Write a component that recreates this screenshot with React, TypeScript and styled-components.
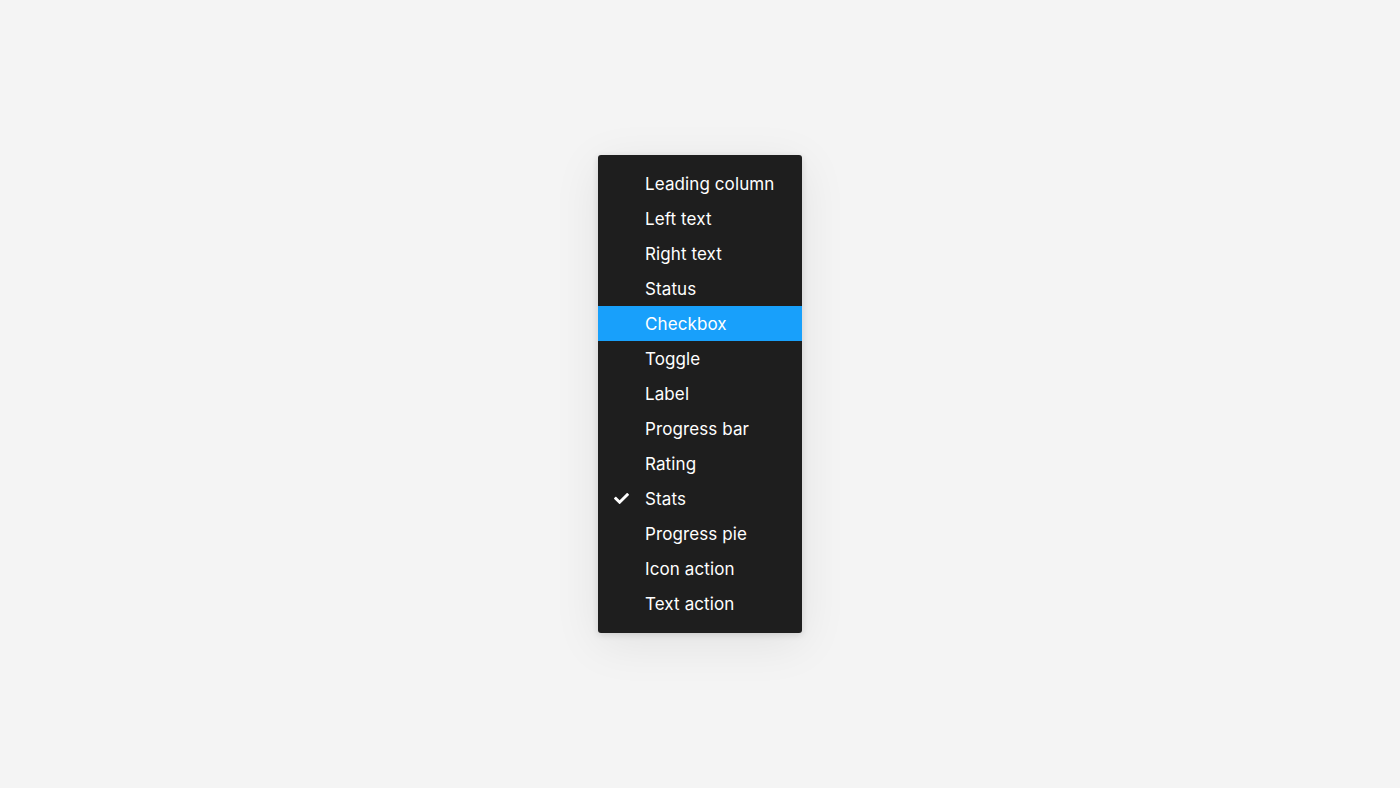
import styled, { createGlobalStyle } from "styled-components";
import { FaCheck } from "react-icons/fa";

const GlobalStyle = createGlobalStyle`
  html, body {
    margin: 0;
    padding: 0;
    background: #f4f4f4;
  }
`;

const Page = styled.div`
  display: flex;
  justify-content: center;
  width: 1400px;
  height: 788px;
  padding-top: 155px;
  box-sizing: border-box;
  background: #f4f4f4;
  font-family: Inter, "Noto Sans", sans-serif;
`;

const Menu = styled.ul`
  width: 204px;
  height: 478px;
  box-sizing: border-box;
  margin: 0;
  padding: 11px 0 12px;
  list-style: none;
  border-radius: 3px;
  background: #1e1e1e;
  box-shadow:
    0 2px 7px rgba(0, 0, 0, 0.12),
    0 10px 48px rgba(0, 0, 0, 0.08);
`;

const Item = styled.li<{ $active?: boolean }>`
  display: flex;
  align-items: center;
  height: 35px;
  padding-left: 16px;
  background: ${({ $active }) => ($active ? "#18a0fb" : "transparent")};
  color: #ffffff;
  font-size: 17px;
  letter-spacing: 0.1px;
`;

const CheckSlot = styled.span`
  display: flex;
  align-items: center;
  width: 31px;
  flex-shrink: 0;
  font-size: 15px;
`;

const items = [
  "Leading column",
  "Left text",
  "Right text",
  "Status",
  "Checkbox",
  "Toggle",
  "Label",
  "Progress bar",
  "Rating",
  "Stats",
  "Progress pie",
  "Icon action",
  "Text action",
];

export default function App() {
  return (
    <>
      <GlobalStyle />
      <Page>
        <Menu>
          {items.map((label) => (
            <Item key={label} $active={label === "Checkbox"}>
              <CheckSlot>{label === "Stats" && <FaCheck />}</CheckSlot>
              {label}
            </Item>
          ))}
        </Menu>
      </Page>
    </>
  );
}
